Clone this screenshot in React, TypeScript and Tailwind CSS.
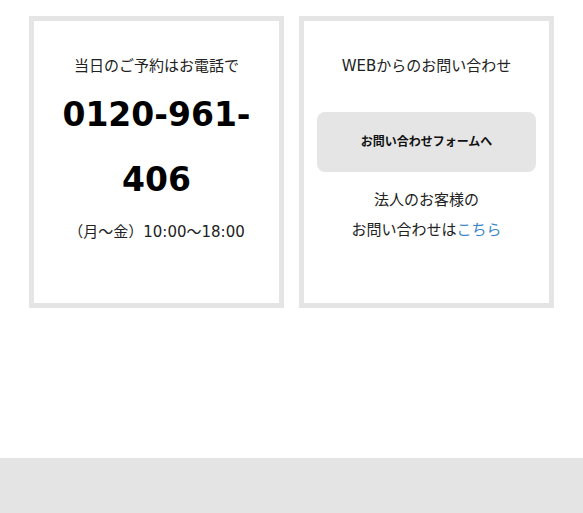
export default function App() {
  const font = { fontFamily: '"DejaVu Sans", "Noto Sans CJK JP", sans-serif' }

  return (
    <div className="bg-white text-[#222]" style={font}>
      <div className="grid grid-cols-2 gap-[15px] px-[29px] pt-[16px] pb-[150px]">
        {/* Phone */}
        <div className="border-[5px] border-[#e5e5e5] px-[13px] pt-[30px] pb-[56px] text-center">
          <p className="text-[15px] leading-[30px]">当日のご予約はお電話で</p>
          <p className="mt-[1px] text-[33px] leading-[65px] font-bold text-black">0120-961-406</p>
          <p className="mt-[5px] text-[15px] leading-[30px]">（月～金）10:00～18:00</p>
        </div>

        {/* Web */}
        <div className="border-[5px] border-[#e5e5e5] px-[13px] pt-[30px] pb-[58px] text-center">
          <p className="text-[15px] leading-[30px]">WEBからのお問い合わせ</p>
          <a
            href="#"
            className="mt-[31px] flex h-[60px] items-center justify-center rounded-[8px] bg-[#e5e5e5] text-[12px] font-bold text-[#111]"
          >
            お問い合わせフォームへ
          </a>
          <p className="mt-[13px] text-[15px] leading-[30px]">
            法人のお客様の
            <br />
            お問い合わせは<a href="#" className="text-[#3a86c8]">こちら</a>
          </p>
        </div>
      </div>
      <div className="h-[55px] bg-[#e4e4e4]" />
    </div>
  )
}
